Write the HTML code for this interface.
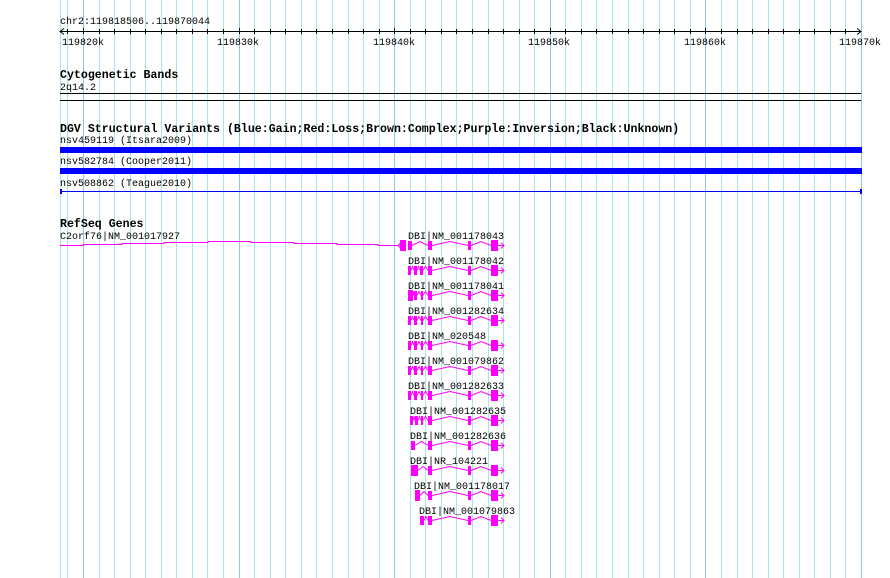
<!DOCTYPE html>
<html><head><meta charset="utf-8"><style>
html,body{margin:0;padding:0;background:#fff;}
svg{display:block;}
text{font-family:"Liberation Mono","DejaVu Sans Mono",monospace;font-size:10px;fill:#000;}
.b{font-weight:bold;font-size:11.6px;}
</style></head><body>
<svg id="s" width="890" height="578" xmlns="http://www.w3.org/2000/svg">
<g id="grid"></g>
<g id="draw"></g>
<text x="60" y="24">chr2:119818506..119870044</text>
<text x="62" y="45">119820k</text>
<text x="217" y="45">119830k</text>
<text x="373" y="45">119840k</text>
<text x="528" y="45">119850k</text>
<text x="684" y="45">119860k</text>
<text x="839" y="45">119870k</text>
<text class="b" x="60" y="78">Cytogenetic Bands</text>
<text x="60" y="90">2q14.2</text>
<text class="b" x="60" y="132">DGV Structural Variants (Blue:Gain;Red:Loss;Brown:Complex;Purple:Inversion;Black:Unknown)</text>
<text x="60" y="143">nsv459119 (Itsara2009)</text>
<text x="60" y="164">nsv582784 (Cooper2011)</text>
<text x="60" y="186">nsv508862 (Teague2010)</text>
<text class="b" x="60" y="227">RefSeq Genes</text>
<text x="60" y="239">C2orf76|NM_001017927</text>
<text x="408" y="239">DBI|NM_001178043</text>
<text x="408" y="264">DBI|NM_001178042</text>
<text x="408" y="289">DBI|NM_001178041</text>
<text x="408" y="314">DBI|NM_001282634</text>
<text x="408" y="339">DBI|NM_020548</text>
<text x="408" y="364">DBI|NM_001079862</text>
<text x="408" y="389">DBI|NM_001282633</text>
<text x="410" y="414">DBI|NM_001282635</text>
<text x="410" y="439">DBI|NM_001282636</text>
<text x="410" y="464">DBI|NR_104221</text>
<text x="414" y="489">DBI|NM_001178017</text>
<text x="419" y="514">DBI|NM_001079863</text>
</svg>
<script>
var NS="http://www.w3.org/2000/svg";
function el(p,n,a){var e=document.createElementNS(NS,n);for(var k in a)e.setAttribute(k,a[k]);document.getElementById(p).appendChild(e);return e;}
var step=15.56;
// grid
el("grid","line",{x1:60.5,x2:60.5,y1:0,y2:578,stroke:"#a8e4f0"});
for(var k=-1;k<=50;k++){var x=Math.round(83+k*step)+0.5;if(x>862)break;
 var maj=(k%10==0);
 el("grid","line",{x1:x,x2:x,y1:0,y2:578,stroke:maj?"#88c8e8":"#a8e4f0"});}
// ruler
el("draw","line",{x1:60,x2:861,y1:31.5,y2:31.5,stroke:"#000"});
el("draw","path",{d:"M64 28.5L60 31.5L64 34.5M857 28.5L861 31.5L857 34.5",stroke:"#000",fill:"none"});
for(var k=-1;k<=50;k++){var x=Math.round(83+k*step)+0.5;if(x>860)break;
 el("draw","line",{x1:x,x2:x,y1:(k%10==0)?28:29,y2:34,stroke:"#000"});}
// cytoband
el("draw","line",{x1:60,x2:861,y1:93.5,y2:93.5,stroke:"#000"});
el("draw","line",{x1:60,x2:861,y1:100.5,y2:100.5,stroke:"#000"});
// DGV
el("draw","rect",{x:60,y:147,width:802,height:6,fill:"#0000ff"});
el("draw","rect",{x:60,y:168,width:802,height:6,fill:"#0000ff"});
el("draw","line",{x1:60,x2:862,y1:191.5,y2:191.5,stroke:"#0000ff"});
el("draw","rect",{x:60,y:189,width:2,height:5,fill:"#0000ff"});
el("draw","rect",{x:860,y:189,width:2,height:5,fill:"#0000ff"});
var M="#ff00ff";
// C2orf76
var pts=[[60,245],[83,245],[83,244],[122,244],[122,243],[164,243],[164,242],[208,242],[208,241],[251,241],[251,242],[294,242],[294,243],[337,243],[337,244],[378,244],[378,245],[398,245]];
el("draw","polyline",{points:pts.map(function(p){return p[0]+","+(p[1]+.5)}).join(" "),stroke:M,fill:"none"});
el("draw","path",{d:"M401 242.5L398 245.5L401 248.5",stroke:M,fill:"none"});
el("draw","rect",{x:400,y:240,width:6,height:11,fill:M});
// DBI rows
var rows=[
 [[408,411],[428,431],[468,470],[491,497]],
 [[408,410],[414,416],[420,422],[428,431],[468,470],[491,497]],
 [[408,412],[414,416],[421,422],[428,431],[468,470],[491,497]],
 [[408,410],[414,416],[421,422],[428,431],[468,470],[491,497]],
 [[408,410],[414,416],[421,422],[428,431],[468,470],[491,497]],
 [[408,410],[414,416],[421,422],[428,431],[468,470],[491,497]],
 [[408,410],[414,416],[421,422],[428,431],[468,470],[491,497]],
 [[410,412],[415,417],[421,422],[428,431],[468,470],[491,497]],
 [[411,414],[428,431],[468,470],[491,497]],
 [[411,417],[428,431],[468,470],[491,497]],
 [[415,419],[428,431],[468,470],[491,497]],
 [[420,423],[428,431],[468,470],[491,497]]
];
rows.forEach(function(r,i){
 var y=245+i*25;
 var d="";
 for(var j=0;j<r.length;j++){
  var e=r[j];var h=(j==r.length-1||(e[1]-e[0]>=4))?11:9;
  if(j==r.length-1)h=11;
  el("draw","rect",{x:e[0],y:y-(h-1)/2,width:e[1]-e[0]+1,height:h,fill:M});
  if(j<r.length-1){var a=e[1]+1,b=r[j+1][0],m=(a+b)/2;
   d+="M"+a+" "+(y+.5)+"L"+m+" "+(y-3.5)+"L"+b+" "+(y+.5);}
 }
 var l=r[r.length-1][1]+1;
 d+="M"+l+" "+(y+.5)+"L504 "+(y+.5)+"M501 "+(y-2.5)+"L504 "+(y+.5)+"L501 "+(y+3.5);
 el("draw","path",{d:d,stroke:M,fill:"none"});
});
</script>
</body></html>
